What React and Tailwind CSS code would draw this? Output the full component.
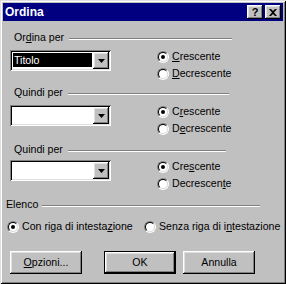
import React from 'react';

const raised = 'shadow-[inset_-1px_-1px_#000,inset_1px_1px_#fff,inset_-2px_-2px_#808080,inset_2px_2px_#dfdfdf]';
const sunken = 'shadow-[inset_1px_1px_#808080,inset_-1px_-1px_#fff,inset_2px_2px_#000,inset_-2px_-2px_#dfdfdf]';

const Line = () => (
  <div className="flex-1 h-0 mt-[7px] border-t border-t-[#808080] border-b border-b-white" />
);

const Radio = ({ checked, children, className = '' }) => (
  <div className={`flex items-center h-[13px] leading-[13px] whitespace-nowrap ${className}`}>
    <span className="relative shrink-0 w-[12px] h-[12px] rounded-full border border-t-[#808080] border-l-[#808080] border-r-white border-b-white">
      <span className="absolute inset-0 rounded-full bg-white border border-t-black border-l-black border-r-[#dfdfdf] border-b-[#dfdfdf] flex items-center justify-center">
        {checked && <span className="w-[4px] h-[4px] rounded-full bg-black" />}
      </span>
    </span>
    <span className="ml-[3px]">{children}</span>
  </div>
);

const Arrow = () => (
  <svg width="7" height="4" viewBox="0 0 7 4">
    <path d="M0 0h7L3.5 4z" fill="#000" />
  </svg>
);

const Combo = ({ value }) => (
  <div className={`w-[101px] h-[21px] bg-white p-[2px] flex ${sunken}`}>
    <div className="flex-1 pl-[1px] pt-[1px] pr-[1px]">
      {value && (
        <div className="h-[14px] bg-black text-white leading-[14px] pl-[1px]">{value}</div>
      )}
    </div>
    <div className={`w-[16px] h-[17px] bg-[#c0c0c0] flex items-center justify-center ${raised}`}>
      <Arrow />
    </div>
  </div>
);

const Section = ({ label, headerClass, bodyClass, lineWidth, value, up, down }) => (
  <>
    <div className={`flex h-[13px] leading-[13px] pl-[11px] ${headerClass} ${lineWidth}`}>
      <span>{label}</span>
      <div className="ml-[5px] flex-1 flex"><Line /></div>
    </div>
    <div className={`flex items-start ${bodyClass}`}>
      <div className="ml-[7px]"><Combo value={value} /></div>
      <div className="ml-[46px] flex flex-col gap-[4px]">
        <Radio checked>{up}</Radio>
        <Radio>{down}</Radio>
      </div>
    </div>
  </>
);

const Btn = ({ children, isDefault, className = '' }) => (
  isDefault ? (
    <div className={`w-[72px] h-[23px] border border-black ${className}`}>
      <div className={`w-full h-full flex items-center justify-center bg-[#c0c0c0] ${raised}`}>{children}</div>
    </div>
  ) : (
    <div className={`w-[72px] h-[23px] flex items-center justify-center bg-[#c0c0c0] ${raised} ${className}`}>{children}</div>
  )
);

export default function App() {
  return (
    <div
      className="w-[286px] h-[284px] bg-[#c0c0c0] p-[3px] flex flex-col text-[10.6px] text-black shadow-[inset_1px_1px_#dfdfdf,inset_-1px_-1px_#000,inset_2px_2px_#fff,inset_-2px_-2px_#808080]"
      style={{ fontFamily: '"Liberation Sans", Arial, sans-serif' }}
    >
      {/* title bar */}
      <div className="h-[18px] bg-[#000080] flex items-center">
        <span className="pl-[2px] text-white font-bold text-[12px]">Ordina</span>
        <div className="ml-auto mr-[2px] flex gap-[2px]">
          <div className={`w-[16px] h-[14px] bg-[#c0c0c0] flex items-center justify-center font-bold text-[11px] leading-none ${raised}`}>?</div>
          <div className={`w-[16px] h-[14px] bg-[#c0c0c0] flex items-center justify-center ${raised}`}>
            <svg width="8" height="7" viewBox="0 0 8 7">
              <path d="M0 0h2l2 2 2-2h2L5 3.5 8 7H6L4 5 2 7H0l3-3.5z" fill="#000" />
            </svg>
          </div>
        </div>
      </div>

      <Section
        label={<>Or<span className="underline">d</span>ina per</>}
        headerClass="mt-[10px]"
        bodyClass="mt-[6px]"
        lineWidth="w-[229px]"
        value="Titolo"
        up={<><span className="underline">C</span>rescente</>}
        down={<><span className="underline">D</span>ecrescente</>}
      />
      <Section
        label="Quindi per"
        headerClass="mt-[6px]"
        bodyClass="mt-[6px]"
        lineWidth="w-[226px]"
        up={<>C<span className="underline">r</span>escente</>}
        down={<>D<span className="underline">e</span>crescente</>}
      />
      <Section
        label="Quindi per"
        headerClass="mt-[8px]"
        bodyClass="mt-[4px]"
        lineWidth="w-[223px]"
        up={<>Cre<span className="underline">s</span>cente</>}
        down={<>Decrescen<span className="underline">t</span>e</>}
      />

      {/* elenco */}
      <div className="flex h-[13px] leading-[13px] pl-[3px] mt-[8px] w-[257px]">
        <span>Elenco</span>
        <div className="ml-[4px] flex-1 flex"><Line /></div>
      </div>
      <div className="flex mt-[9px] pl-[4px]">
        <Radio checked className="w-[137px]">Con riga di intesta<span className="underline">z</span>ione</Radio>
        <Radio>Senza riga di i<span className="underline">n</span>testazione</Radio>
      </div>

      {/* buttons */}
      <div className="flex mt-[18px] pl-[7px]">
        <Btn><span><span className="underline">O</span>pzioni...</span></Btn>
        <Btn isDefault className="ml-[22px]">OK</Btn>
        <Btn className="ml-[7px]">Annulla</Btn>
      </div>
    </div>
  );
}
